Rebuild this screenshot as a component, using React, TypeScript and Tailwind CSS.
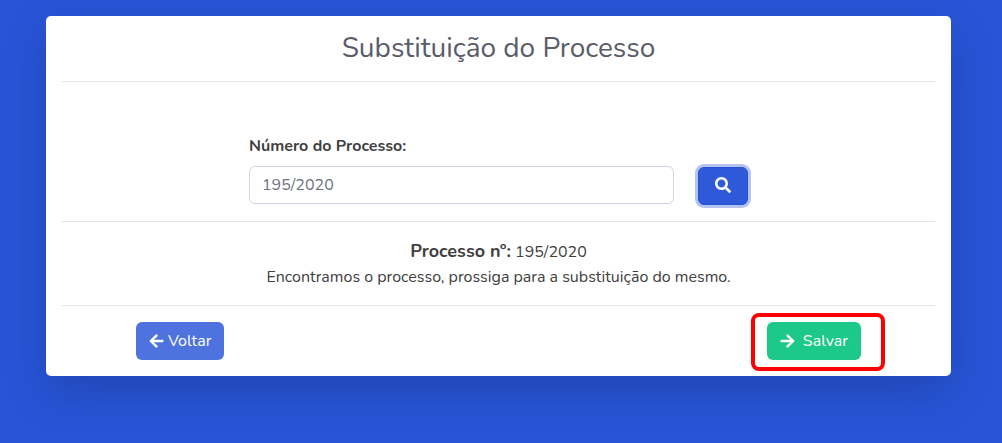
import { useState } from "react";
import type { FormEvent } from "react";
import { FaArrowLeft, FaArrowRight, FaSearch } from "react-icons/fa";

const Divider = () => <hr className="border-0 border-t border-black/10" />;

const App = () => {
  const [numero, setNumero] = useState("195/2020");
  const [encontrado, setEncontrado] = useState("195/2020");

  const buscar = (e: FormEvent) => {
    e.preventDefault();
    setEncontrado(numero);
  };

  return (
    <div className="min-h-screen bg-[#2855d8] pt-4 pr-[51px] pb-12 pl-[46px] font-['Nunito',sans-serif] text-base text-[#404040]">
      <main className="flex flex-col gap-4 rounded-[5px] bg-white p-4 shadow-[0_16px_48px_rgba(0,0,0,0.175)]">
        <h1 className="text-center text-[28px] leading-[33px] font-normal text-[#5a5c69]">
          Substituição do Processo
        </h1>
        <Divider />

        <form onSubmit={buscar} className="mx-auto mt-9 w-full max-w-[499px]">
          <label htmlFor="numero" className="mb-2 block font-bold">
            Número do Processo:
          </label>
          <div className="flex h-[39px] gap-6">
            <input
              id="numero"
              type="text"
              value={numero}
              onChange={(e) => setNumero(e.target.value)}
              className="h-[38px] min-w-0 flex-1 rounded-[6px] border border-[#d1d3e2] bg-white px-3 text-[#6e707e] outline-none"
            />
            <button
              type="submit"
              aria-label="Buscar processo"
              className="flex h-[38px] w-[50px] items-center justify-center self-end rounded-[6px] border border-[#2653d4] bg-[#2e59d9] pb-0.5 text-white shadow-[0_0_0_3px_#b4c3f1]"
            >
              <FaSearch />
            </button>
          </div>
        </form>
        <Divider />

        <div className="text-center">
          <p className="leading-[26px]">
            <strong className="text-lg leading-[26px]">Processo nº:</strong> {encontrado}
          </p>
          <p>Encontramos o processo, prossiga para a substituição do mesmo.</p>
        </div>
        <Divider />

        <div className="flex justify-between px-[74px]">
          <button type="button" className="flex h-[38px] items-center gap-1 rounded-[6px] bg-[#4e73df] px-[13px] text-white">
            <FaArrowLeft className="w-[15px]" />
            Voltar
          </button>
          <div className="relative">
            <button type="button" className="flex h-[38px] items-center gap-2 rounded-[6px] bg-[#1cc88a] px-[13px] text-white">
              <FaArrowRight className="w-[15px]" />
              Salvar
            </button>
            {/* highlight around the save action */}
            <span className="pointer-events-none absolute -top-[9px] -right-6 -bottom-[11px] -left-4 rounded-[8px] border-4 border-[#ff0000]" />
          </div>
        </div>
      </main>
    </div>
  );
};

export default App;
